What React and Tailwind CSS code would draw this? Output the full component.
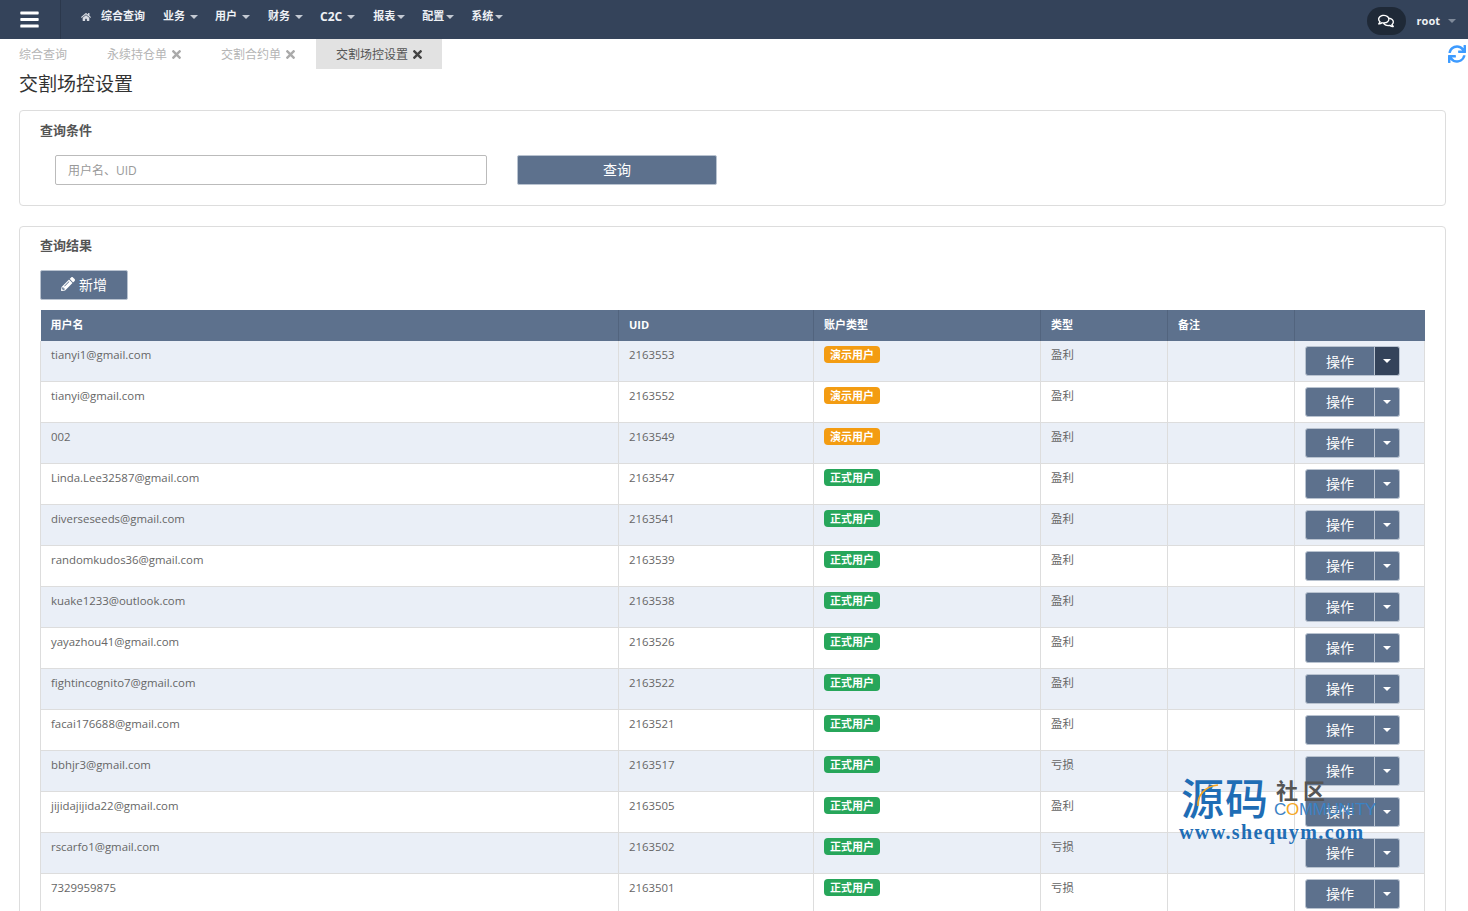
import React from 'react';
import { FaBars, FaHome, FaTimes, FaPencilAlt, FaSync, FaRegComments } from 'react-icons/fa';

const navItems = [
  { label: '业务', item: 'ml-[18px]', gap: 'ml-[5px]' },
  { label: '用户', item: 'ml-[17px]', gap: 'ml-[5px]' },
  { label: '财务', item: 'ml-[18px]', gap: 'ml-[5px]' },
  { label: 'C2C', item: 'ml-[17px] text-[12px]', gap: 'ml-[5px]' },
  { label: '报表', item: 'ml-[18px]', gap: 'ml-[2px]' },
  { label: '配置', item: 'ml-[17px]', gap: 'ml-[2px]' },
  { label: '系统', item: 'ml-[17px]', gap: 'ml-[2px]' },
];

const rows = [
  ['tianyi1@gmail.com', '2163553', '演示用户', '盈利'],
  ['tianyi@gmail.com', '2163552', '演示用户', '盈利'],
  ['002', '2163549', '演示用户', '盈利'],
  ['Linda.Lee32587@gmail.com', '2163547', '正式用户', '盈利'],
  ['diverseseeds@gmail.com', '2163541', '正式用户', '盈利'],
  ['randomkudos36@gmail.com', '2163539', '正式用户', '盈利'],
  ['kuake1233@outlook.com', '2163538', '正式用户', '盈利'],
  ['yayazhou41@gmail.com', '2163526', '正式用户', '盈利'],
  ['fightincognito7@gmail.com', '2163522', '正式用户', '盈利'],
  ['facai176688@gmail.com', '2163521', '正式用户', '盈利'],
  ['bbhjr3@gmail.com', '2163517', '正式用户', '亏损'],
  ['jijidajijida22@gmail.com', '2163505', '正式用户', '盈利'],
  ['rscarfo1@gmail.com', '2163502', '正式用户', '亏损'],
  ['7329959875', '2163501', '正式用户', '亏损'],
];

function Caret({ className }) {
  return <span className={`inline-block w-0 h-0 border-x-[4px] border-x-transparent border-t-[4px] ${className}`} />;
}

function Navbar() {
  return (
    <div className="h-[39px] bg-[#34435a] flex items-center shrink-0">
      <div className="w-[61px] h-full border-r border-[#2b384c] flex items-center pl-[19px] shrink-0">
        <FaBars className="text-white text-[21px]" />
      </div>
      <div className="flex items-center pl-[20px] pb-[6px] text-[11px] font-bold text-[#eef1f5]">
        <div className="flex items-center">
          <FaHome className="text-[10px] text-[#d8dce3] mr-[10px]" />
          <span>综合查询</span>
        </div>
        {navItems.map(nav => (
          <div key={nav.label} className={`flex items-center ${nav.item}`}>
            <span>{nav.label}</span>
            <Caret className={`${nav.gap} border-t-[#c4cad3]`} />
          </div>
        ))}
      </div>
      <div className="ml-auto flex items-center pr-[12px] pt-[3px]">
        <div className="w-[39px] h-[28px] mr-px rounded-full bg-[#1f2937] flex items-center justify-center">
          <FaRegComments className="text-white text-[16px]" />
        </div>
        <span className="ml-[10px] text-[11px] font-bold text-[#eef1f5]">root</span>
        <Caret className="ml-[8px] border-t-[#7f8a9a]" />
      </div>
    </div>
  );
}

function Tabs() {
  return (
    <div className="h-[30px] shrink-0 flex items-stretch text-[12px] text-[#b5b5b5] relative">
      <div className="flex items-center pt-px pl-[19px] pr-[20px]">综合查询</div>
      <div className="flex items-center pt-px px-[20px]">
        永续持仓单
        <FaTimes className="ml-[5px] w-[9px] h-[13px] text-[#aaaaaa]" />
      </div>
      <div className="flex items-center pt-px px-[20px]">
        交割合约单
        <FaTimes className="ml-[5px] w-[9px] h-[13px] text-[#aaaaaa]" />
      </div>
      <div className="flex items-center pt-px ml-px px-[20px] bg-[#e2e2e2] text-[#555555]">
        交割场控设置
        <FaTimes className="ml-[5px] w-[9px] h-[13px] text-[#444444]" />
      </div>
      <FaSync className="absolute right-[2px] top-[6px] text-[18px] text-[#3d9bff]" />
    </div>
  );
}

function Row({ row, index }) {
  const isDemo = row[2] === '演示用户';
  const first = index === 0;
  const cell = 'border-l border-[#dddddd] px-[10px] pt-[5px] leading-[17px] align-top';
  return (
    <tr className={`border-b border-[#dddddd] ${first ? 'h-[40px]' : 'h-[41px]'} ${index % 2 === 0 ? 'bg-[#eaeff7]' : 'bg-white'}`}>
      <td className={cell}>{row[0]}</td>
      <td className={cell}>{row[1]}</td>
      <td className={cell}>
        <span className={`block w-[56px] h-[17px] rounded-[4px] text-center text-[11px] leading-[17px] font-bold text-white ${isDemo ? 'bg-[#f39c12]' : 'bg-[#27a65a]'}`}>
          {row[2]}
        </span>
      </td>
      <td className={cell}>{row[3]}</td>
      <td className={cell}></td>
      <td className="border-x border-[#dddddd] pl-[10px] pt-[5px] align-top">
        <div className="flex w-[95px] h-[30px] text-white">
          <div className="w-[70px] h-full bg-[#5d718d] border border-[#b9c3d0] rounded-l-[3px] flex items-center justify-center text-[14px]">
            操作
          </div>
          <div className={`w-[25px] h-full border border-l-0 border-[#b9c3d0] rounded-r-[3px] flex items-center justify-center ${first ? 'bg-[#34435a]' : 'bg-[#5d718d]'}`}>
            <Caret className="border-t-white" />
          </div>
        </div>
      </td>
    </tr>
  );
}

function Watermark() {
  return (
    <div className="absolute left-[1179px] top-[774px] w-[220px] h-[72px] text-[#1f6db5]">
      <div className="absolute left-[2px] top-px text-[43px] leading-[48px] tracking-[1px] font-medium">源码</div>
      <svg className="absolute left-[16px] top-[8px] w-[26px] h-[26px]" viewBox="0 0 26 26" fill="none">
        <path d="M3 24C2 14 10 4 23 3" stroke="#f5a623" strokeWidth="1.6" />
      </svg>
      <div className="absolute left-[97px] top-[4px] text-[22px] leading-[24px] font-bold tracking-[5px] text-[#555555]">社区</div>
      <div className="absolute left-[95px] top-[26px] text-[17px] leading-[20px] tracking-[-0.3px] text-[#3b82c4] font-['Liberation_Sans',sans-serif]">
        C<span className="text-[#f5a623]">O</span>MMUNITY
      </div>
      <div className="absolute left-0 top-[47px] text-[20px] leading-[22px] font-bold tracking-[1.4px] font-['Liberation_Serif',serif]">
        www.shequym.com
      </div>
    </div>
  );
}

export default function App() {
  return (
    <div className="relative h-[911px] overflow-hidden bg-white flex flex-col text-[#666666] text-[11.4px] font-['Open_Sans','Noto_Sans_CJK_SC',sans-serif]">
      <Navbar />
      <Tabs />
      <h1 className="ml-[19px] mt-[1px] text-[19px] leading-[28px] text-[#333333] font-normal shrink-0">交割场控设置</h1>
      <div className="mr-[22px] ml-[19px] mt-[12px] h-[96px] shrink-0 border border-[#dddddd] rounded-[4px] px-[20px] pt-[10px]">
        <h2 className="text-[13px] leading-[18px] font-bold text-[#555555]">查询条件</h2>
        <div className="flex mt-[16px] ml-[15px]">
          <input
            placeholder="用户名、UID"
            className="w-[432px] h-[30px] border border-[#bbbbbb] rounded-[2px] px-[12px] text-[12px] placeholder:text-[#999999] outline-none"
          />
          <button className="ml-[30px] w-[200px] h-[30px] pb-[2px] bg-[#5d718d] border border-[#b9c3d0] rounded-[2px] text-white text-[14px]">
            查询
          </button>
        </div>
      </div>
      <div className="mr-[22px] ml-[19px] mt-[20px] shrink-0 border border-[#dddddd] rounded-[4px] px-[20px] pt-[9px]">
        <h2 className="text-[13px] leading-[18px] font-bold text-[#555555]">查询结果</h2>
        <button className="mt-[16px] w-[88px] h-[30px] pb-[2px] bg-[#5d718d] border border-[#b9c3d0] rounded-[2px] text-white text-[14px] flex items-center justify-center gap-[4px]">
          <FaPencilAlt className="text-[14px]" />
          新增
        </button>
        <table className="mt-[10px] w-[1384px] table-fixed border-collapse">
          <colgroup>
            <col className="w-[578px]" />
            <col className="w-[195px]" />
            <col className="w-[227px]" />
            <col className="w-[127px]" />
            <col className="w-[127px]" />
            <col className="w-[130px]" />
          </colgroup>
          <thead>
            <tr className="h-[31px] bg-[#5d718d] text-white text-[11px] font-bold text-left">
              <th className="px-[10px]">用户名</th>
              <th className="px-[10px] border-l border-[#52647e]">UID</th>
              <th className="px-[10px] border-l border-[#52647e]">账户类型</th>
              <th className="px-[10px] border-l border-[#52647e]">类型</th>
              <th className="px-[10px] border-l border-[#52647e]">备注</th>
              <th className="border-l border-[#52647e]"></th>
            </tr>
          </thead>
          <tbody>
            {rows.map((row, index) => (
              <Row key={row[1]} row={row} index={index} />
            ))}
          </tbody>
        </table>
      </div>
      <Watermark />
    </div>
  );
}
